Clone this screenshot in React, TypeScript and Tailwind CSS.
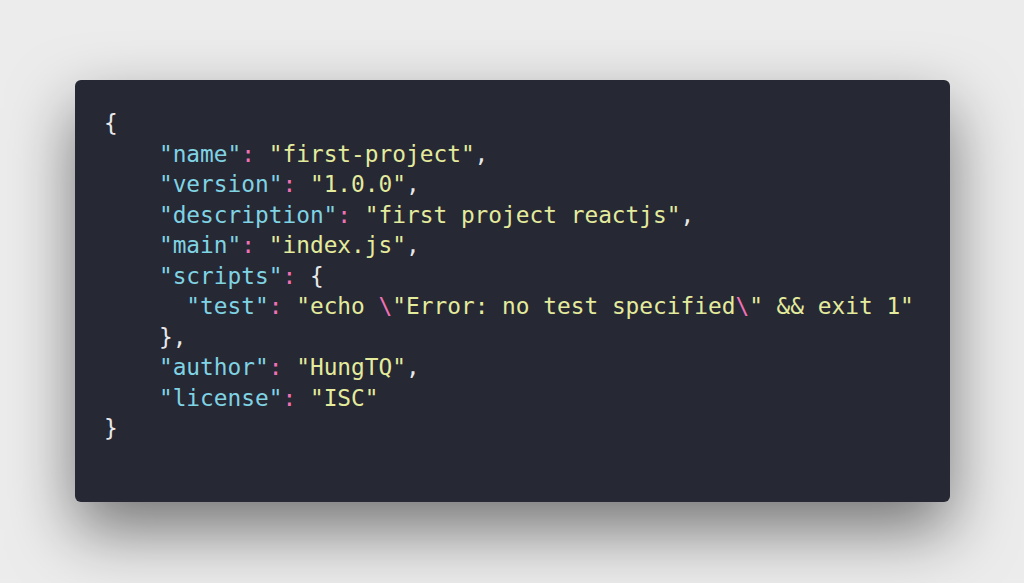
import React from "react";

const K = ({ children }: { children: React.ReactNode }) => <span className="text-[#80d3e3]">{children}</span>;
const S = ({ children }: { children: React.ReactNode }) => <span className="text-[#e4eb9c]">{children}</span>;
const P = ({ children }: { children: React.ReactNode }) => <span className="text-[#f271b6]">{children}</span>;
const W = ({ children }: { children: React.ReactNode }) => <span className="text-[#e8e8ea]">{children}</span>;

export default function App() {
  return (
    <div className="w-[1024px] h-[583px] bg-[#ececec] flex items-start overflow-hidden">
      <div className="ml-[75px] mt-[80px] w-[875px] h-[422px] rounded-[6px] bg-[#262834] shadow-[0_28px_65px_rgba(0,0,0,0.5)] pl-[29px] pt-[28px] box-border">
        <pre className="m-0 text-[22.8px] leading-[30.5px] whitespace-pre text-[#e8e8ea] font-['DejaVu_Sans_Mono','Liberation_Mono',monospace]">
          <W>{"{"}</W>{"\n"}
          {"    "}<K>"name"</K><P>:</P> <S>"first-project"</S><W>,</W>{"\n"}
          {"    "}<K>"version"</K><P>:</P> <S>"1.0.0"</S><W>,</W>{"\n"}
          {"    "}<K>"description"</K><P>:</P> <S>"first project reactjs"</S><W>,</W>{"\n"}
          {"    "}<K>"main"</K><P>:</P> <S>"index.js"</S><W>,</W>{"\n"}
          {"    "}<K>"scripts"</K><P>:</P> <W>{"{"}</W>{"\n"}
          {"      "}<K>"test"</K><P>:</P> <S>"echo </S><P>\</P><S>"Error: no test specified</S><P>\</P><S>" &amp;&amp; exit 1"</S>{"\n"}
          {"    "}<W>{"},"}</W>{"\n"}
          {"    "}<K>"author"</K><P>:</P> <S>"HungTQ"</S><W>,</W>{"\n"}
          {"    "}<K>"license"</K><P>:</P> <S>"ISC"</S>{"\n"}
          <W>{"}"}</W>
        </pre>
      </div>
    </div>
  );
}
